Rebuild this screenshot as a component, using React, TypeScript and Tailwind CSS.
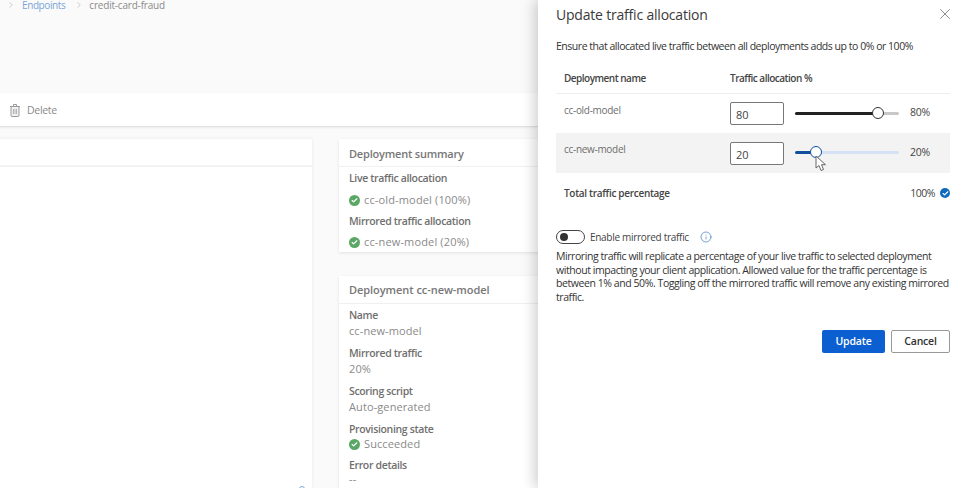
import {ChevronRight, X, Check, Info} from "lucide-react"

const font = {fontFamily: '"Open Sans", sans-serif'}

function GreenCheck() {
	return (
		<span className="w-[11px] h-[11px] rounded-full bg-[#5ba766] flex items-center justify-center shrink-0">
			<Check size={7} strokeWidth={4} className="text-white" />
		</span>
	)
}

function Field({label, last, children}: {label: string; last?: boolean; children: React.ReactNode}) {
	return (
		<div>
			<div className="h-[16px] leading-[16px] text-[10.5px] font-semibold text-[#6f6f6f] tracking-[-0.35px]">{label}</div>
			<div className={`${last ? "h-[12px] leading-[12px]" : "h-[16px] leading-[16px]"} text-[#8a8a8a] tracking-[0.1px]`}>{children}</div>
		</div>
	)
}

function SliderRow({
	name,
	value,
	fill,
	rest,
	shaded,
}: {
	name: string
	value: number
	fill: string
	rest: string
	shaded?: boolean
}) {
	return (
		<div className={`${shaded ? "bg-[#f3f3f3] h-[40px] pt-[9px]" : "h-[39px] pt-[8px]"} flex pl-[8px]`}>
			<div className={`${shaded ? "-mt-[1px]" : ""} w-[166px] text-[#6e6e6e] text-[10px] tracking-[-0.3px] leading-[16px]`}>{name}</div>
			<div className="w-[54px] h-[23px] border border-[#777] rounded-[2px] bg-white pl-[5px] text-[11px] text-[#444] leading-[23px]">
				{value}
			</div>
			<div className={`relative ml-[11px] ${shaded ? "mt-[9px]" : "mt-[10px]"} w-[104px] h-[3px] rounded-full ${rest}`}>
				<div className={`h-[3px] rounded-full ${fill}`} style={{width: `${value === 80 ? 83 : 21}px`}} />
				<div
					className={`absolute top-[-5px] w-[12px] h-[12px] rounded-full bg-white border ${
						value === 80 ? "left-[77px] border-[#333]" : "left-[15px] border-[#0f4f9e]"
					}`}
				/>
			</div>
			<div className="ml-[11px] text-[#444] text-[10.5px] tracking-[-0.3px] leading-[21px]">{value}%</div>
		</div>
	)
}

export default function App() {
	return (
		<div className="w-[962px] h-[488px] flex overflow-hidden bg-white text-[11px]" style={font}>
			<div className="w-[538px] h-full bg-[#fafafa] overflow-hidden shrink-0 flex flex-col">
				<div className="h-[93px] shrink-0">
					<div className="h-[10px] leading-[10px] flex items-center pl-[6px] text-[#8a8a8a] text-[10px]">
						<ChevronRight size={10} strokeWidth={1} />
						<span className="ml-[6px] text-[#7aa5d8] tracking-[-0.4px]">Endpoints</span>
						<ChevronRight size={10} strokeWidth={1} className="ml-[9px]" />
						<span className="ml-[5px] tracking-[-0.2px]">credit-card-fraud</span>
					</div>
				</div>
				<div className="h-[34px] shrink-0 bg-white border-b border-[#e2e2e2] shadow-[0_1px_2px_rgba(0,0,0,0.06)] flex items-center pl-[10px] pt-[2px] text-[#8a8a8a] text-[10.5px] tracking-[-0.3px]">
					<svg width="10" height="13" viewBox="0 0 10 13" fill="none" stroke="#9a9a9a" strokeWidth="1">
						<rect x="1" y="2.500" width="8" height="10" rx="1" fill="#f0f0f0" />
						<path d="M0 2.500h10M3.500 2.500v-2h3v2M3.800 5v5M6.200 5v5" />
					</svg>
					<span className="ml-[7px]">Delete</span>
				</div>
				<div className="flex-1 flex pt-[12px] min-h-0">
					<div className="w-[312px] shrink-0 bg-white shadow-[0_0_3px_rgba(0,0,0,0.08)] relative">
						<div className="h-[28px] border-b-2 border-[#f2f2f2]" />
						<svg className="absolute right-[6px] bottom-[-3px] text-[#7aa5d8]" width="8" height="6" viewBox="0 0 8 6" fill="none" stroke="currentColor">
							<circle cx="4" cy="4" r="2.500" />
						</svg>
					</div>
					<div className="ml-[27px] w-[240px] shrink-0">
						<div className="h-[113px] bg-white shadow-[0_1px_3px_rgba(0,0,0,0.1)] mb-[24px]">
							<div className="h-[28px] pt-[1px] leading-[28px] pl-[10px] border-b border-[#f0f0f0] font-semibold text-[#777] text-[11px] tracking-[-0.2px]">
								Deployment summary
							</div>
							<div className="pl-[10px]">
								<div className="h-[22px] leading-[22px] text-[10.5px] font-semibold text-[#6f6f6f] tracking-[-0.35px]">Live traffic allocation</div>
								<div className="h-[22px] flex items-center gap-[4px] text-[#8a8a8a] tracking-[0.15px]">
									<GreenCheck />
									cc-old-model (100%)
								</div>
								<div className="h-[20px] leading-[20px] text-[10.5px] font-semibold text-[#6f6f6f] tracking-[-0.35px]">Mirrored traffic allocation</div>
								<div className="h-[22px] flex items-center gap-[4px] text-[#8a8a8a] tracking-[0.15px]">
									<GreenCheck />
									cc-new-model (20%)
								</div>
							</div>
						</div>
						<div className="h-[240px] bg-white shadow-[0_1px_3px_rgba(0,0,0,0.1)]">
							<div className="h-[28px] leading-[28px] pl-[10px] border-b border-[#f0f0f0] font-semibold text-[#777] text-[11px] tracking-[-0.05px]">
								Deployment cc-new-model
							</div>
							<div className="pl-[10px] pt-[3px] flex flex-col gap-[6px]">
								<Field label="Name">cc-new-model</Field>
								<Field label="Mirrored traffic">20%</Field>
								<Field label="Scoring script">Auto-generated</Field>
								<div>
									<div className="h-[16px] leading-[16px] text-[10.5px] font-semibold text-[#6f6f6f] tracking-[-0.35px]">Provisioning state</div>
									<div className="h-[14px] flex items-center gap-[4px] text-[#8a8a8a] tracking-[0.1px]">
										<GreenCheck />
										Succeeded
									</div>
								</div>
								<Field label="Error details" last>--</Field>
							</div>
						</div>
					</div>
				</div>
			</div>

			<div className="relative z-10 w-[424px] shrink-0 bg-white shadow-[-4px_0_12px_rgba(0,0,0,0.18)] pl-[18px] pr-[12px]">
				<div className="flex justify-between items-center h-[29px]">
					<span className="text-[14px] tracking-[-0.2px] text-[#3a3a3a]">Update traffic allocation</span>
					<X size={18} strokeWidth={0.9} className="text-[#555] -mr-[4px] -mt-[1px]" />
				</div>
				<div className="mt-[9px] h-[16px] leading-[16px] text-[10.5px] text-[#333] tracking-[-0.47px] whitespace-nowrap">
					Ensure that allocated live traffic between all deployments adds up to 0% or 100%
				</div>
				<div className="mt-[16px] h-[24px] flex pl-[8px] border-b border-[#eee] font-semibold text-[10px] text-[#444] leading-[16px] tracking-[-0.5px]">
					<div className="w-[166px]">Deployment name</div>
					<div>Traffic allocation %</div>
				</div>
				<SliderRow name="cc-old-model" value={80} rest="bg-[#c8c8c8]" fill="bg-[#222]" />
				<SliderRow name="cc-new-model" value={20} rest="bg-[#d5e2f3]" fill="bg-[#0f4f9e]" shaded />
				<div className="h-[40px] flex items-center pl-[8px] font-semibold text-[10px] tracking-[-0.3px] text-[#444]">
					<span className="flex-1">Total traffic percentage</span>
					<span className="font-normal text-[10.5px] mr-[5px] tracking-[-0.5px] pt-[1px]">100%</span>
					<span className="w-[10px] h-[10px] rounded-full bg-[#0f6cbd] flex items-center justify-center">
						<Check size={7} strokeWidth={4} className="text-white" />
					</span>
				</div>
				<div className="mt-[14px] h-[20px] flex items-center">
					<div className="w-[29px] h-[14px] rounded-full border border-[#444] pl-[3px] flex items-center">
						<div className="w-[8px] h-[8px] rounded-full bg-[#333]" />
					</div>
					<span className="ml-[5px] text-[10px] tracking-[-0.3px] text-[#444]">Enable mirrored traffic</span>
					<Info size={12} strokeWidth={1.4} className="ml-[11px] text-[#3a78c4]" />
				</div>
				<p className="mt-[3px] leading-[13.5px] text-[10.5px] tracking-[-0.43px] text-[#333]">
					Mirroring traffic will replicate a percentage of your live traffic to selected deployment without impacting your client application. Allowed value for the traffic percentage is between 1% and 50%. Toggling off the mirrored traffic will remove any existing mirrored traffic.
				</p>
				<div className="mt-[26px] flex justify-end gap-[6px]">
					<button className="w-[63px] h-[23px] pt-[1px] rounded-[2px] bg-[#0b5fd0] text-white text-[10.5px] font-semibold tracking-[-0.2px]">Update</button>
					<button className="w-[59px] h-[23px] pt-[1px] rounded-[2px] border border-[#999] text-[#333] text-[10.5px] font-semibold tracking-[-0.2px]">Cancel</button>
				</div>
				<svg className="absolute left-[277px] top-[155px]" width="13" height="17" viewBox="0 0 13 17">
					<path d="M1 1v12l3-2.500 2 5 2.500-1-2-4.800h4z" fill="#fff" stroke="#666" strokeWidth="1" />
				</svg>
			</div>
		</div>
	)
}
